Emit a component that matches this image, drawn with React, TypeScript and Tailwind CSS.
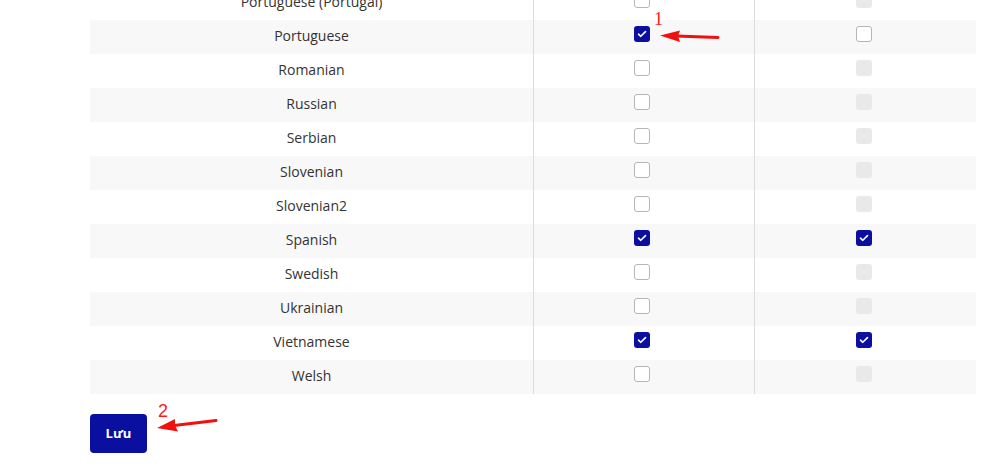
import React from "react";

type Row = { name: string; a: "on" | "off"; b: "on" | "off" | "dis" };

const rows: Row[] = [
  { name: "Portuguese (Portugal)", a: "off", b: "dis" },
  { name: "Portuguese", a: "on", b: "off" },
  { name: "Romanian", a: "off", b: "dis" },
  { name: "Russian", a: "off", b: "dis" },
  { name: "Serbian", a: "off", b: "dis" },
  { name: "Slovenian", a: "off", b: "dis" },
  { name: "Slovenian2", a: "off", b: "dis" },
  { name: "Spanish", a: "on", b: "on" },
  { name: "Swedish", a: "off", b: "dis" },
  { name: "Ukrainian", a: "off", b: "dis" },
  { name: "Vietnamese", a: "on", b: "on" },
  { name: "Welsh", a: "off", b: "dis" },
];

function Box({ state }: { state: "on" | "off" | "dis" }) {
  if (state === "on") {
    return (
      <div className="w-4 h-4 rounded-[3px] bg-[#0b0fa0] flex items-center justify-center">
        <svg width="10" height="8" viewBox="0 0 10 8" fill="none">
          <path d="M1.5 4.2 L3.8 6.3 L8.5 1.6" stroke="white" strokeWidth="1.6" strokeLinecap="round" strokeLinejoin="round" />
        </svg>
      </div>
    );
  }
  if (state === "dis") {
    return <div className="w-4 h-4 rounded-[3px] bg-[#e9e9e9]" />;
  }
  return <div className="w-4 h-4 rounded-[3px] border border-[#b5b5b5] bg-white" />;
}

export default function App() {
  return (
    <div className="relative w-[984px] h-[475px] overflow-hidden bg-white" style={{ fontFamily: '"Open Sans", "Noto Sans", sans-serif' }}>
      <div className="ml-[90px] mr-[8px] -mt-[14px]">
        {rows.map((r, i) => (
          <div key={r.name} className={`flex h-[34px] ${i % 2 === 1 ? "bg-[#f8f8f8]" : "bg-white"}`}>
            <div className="w-[443px] flex items-center justify-center pb-[3px] text-[14px] text-[#333333]">{r.name}</div>
            <div className="w-[221px] border-l border-[#dcdcdc] flex justify-center pt-[6px] pr-[4px]">
              <Box state={r.a} />
            </div>
            <div className="flex-1 border-l border-[#dcdcdc] flex justify-center pt-[6px] pr-[4px]">
              <Box state={r.b} />
            </div>
          </div>
        ))}
        <div className="pt-[20px]">
          <button className="w-[57px] h-[39px] rounded-[4px] bg-[#0b0fa0] text-white text-[13px] font-bold">
            Lưu
          </button>
        </div>
      </div>

      <div className="absolute left-[654px] top-[10px] text-[18px] leading-none text-[#ff1a1a]" style={{ fontFamily: '"Liberation Serif", serif' }}>1</div>
      <div className="absolute left-[158px] top-[402px] text-[18px] leading-none text-[#ff1a1a]" style={{ fontFamily: '"Liberation Sans", sans-serif' }}>2</div>
      <svg className="absolute left-0 top-0 pointer-events-none" width="984" height="475">
        <path d="M718 37.5 L676 36" stroke="#f01010" strokeWidth="3" strokeLinecap="round" />
        <path d="M660 35.5 L680 30.5 L678 36 L680 42 Z" fill="#f01010" />
        <path d="M216 420.5 L174 425.5" stroke="#f01010" strokeWidth="3" strokeLinecap="round" />
        <path d="M157 428 L175 419 L175 425.5 L178 431.5 Z" fill="#f01010" />
      </svg>
    </div>
  );
}
